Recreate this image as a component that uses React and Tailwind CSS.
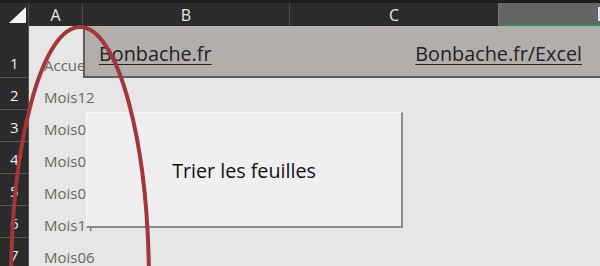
import React from 'react';

const rows = [
  { n: '1', h: 'h-[52px]', text: 'Accueil' },
  { n: '2', h: 'h-[32px]', text: 'Mois12' },
  { n: '3', h: 'h-[32px]', text: 'Mois01' },
  { n: '4', h: 'h-[32px]', text: 'Mois02' },
  { n: '5', h: 'h-[32px]', text: 'Mois03' },
  { n: '6', h: 'h-[32px]', text: 'Mois11' },
  { n: '7', h: 'h-[32px]', text: 'Mois06' },
];

export default function App() {
  return (
    <div className="relative w-[600px] h-[266px] overflow-hidden bg-[#e6e6e6] font-['Open_Sans',sans-serif]">
      {/* en-têtes de colonnes */}
      <div className="flex h-[26px] bg-[#2b2b2b] border-t-[3px] border-[#1e1e1e] text-[#e8e8e8] text-[16px]">
        <div className="w-[29px] shrink-0 border-r border-[#4a4a4a] flex items-end justify-end pr-[2px] pb-[3px]">
          <svg width="17" height="16" viewBox="0 0 17 16">
            <polygon points="0,16 17,16 17,0" fill="#f2f2f2" />
          </svg>
        </div>
        <div className="w-[54px] shrink-0 border-r border-[#4a4a4a] flex items-center justify-center">A</div>
        <div className="w-[207px] shrink-0 border-r border-[#4a4a4a] flex items-center justify-center">B</div>
        <div className="w-[208px] shrink-0 flex items-center justify-center">C</div>
        <div className="flex-1 bg-[#656565] border-l border-[#7a7a7a] border-b-2 border-b-[#2f8a5a] flex items-center justify-end">
          <div className="w-[2px] h-[14px] bg-[#d8e6f5]"></div>
        </div>
      </div>

      {/* lignes */}
      <div className="flex">
        <div className="w-[29px] shrink-0 bg-[#2b2b2b] border-r border-[#555]">
          {rows.map((r) => (
            <div key={r.n} className={`${r.h} border-b border-[#5a5a5a] flex items-end pl-[10px] pb-[3px] text-[15px] text-[#f0f0f0]`}>
              {r.n}
            </div>
          ))}
        </div>
        <div className="flex-1">
          {rows.map((r) => (
            <div key={r.n} className={`${r.h} flex items-end pl-[15px] pb-[2px] text-[15px] text-[#6b6661]`}>
              {r.text}
            </div>
          ))}
        </div>
      </div>

      {/* bandeau */}
      <div className="absolute left-[83px] top-[26px] w-[517px] h-[52px] bg-[#b2aeac] border-l-2 border-b-2 border-[#5e5e5e] flex items-center justify-between pl-[14px] pr-[18px] pt-[5px] text-[19.8px] text-[#222] underline underline-offset-[3px]">
        <span>Bonbache.fr</span>
        <span>Bonbache.fr/Excel</span>
      </div>

      {/* bouton */}
      <div className="absolute left-[86px] top-[112px] w-[317px] h-[116px] bg-[#efefef] border-t border-l border-[#f8f8f8] border-r-2 border-b-2 border-r-[#8a8a8a] border-b-[#8a8a8a] flex items-center justify-center pt-[3px] text-[19.7px] text-[#111]">
        Trier les feuilles
      </div>

      {/* ellipse rouge */}
      <svg className="absolute inset-0" width="600" height="266" viewBox="0 0 600 266">
        <ellipse cx="80" cy="285" rx="69" ry="258" fill="none" stroke="#a3363a" strokeWidth="4" />
      </svg>
    </div>
  );
}
